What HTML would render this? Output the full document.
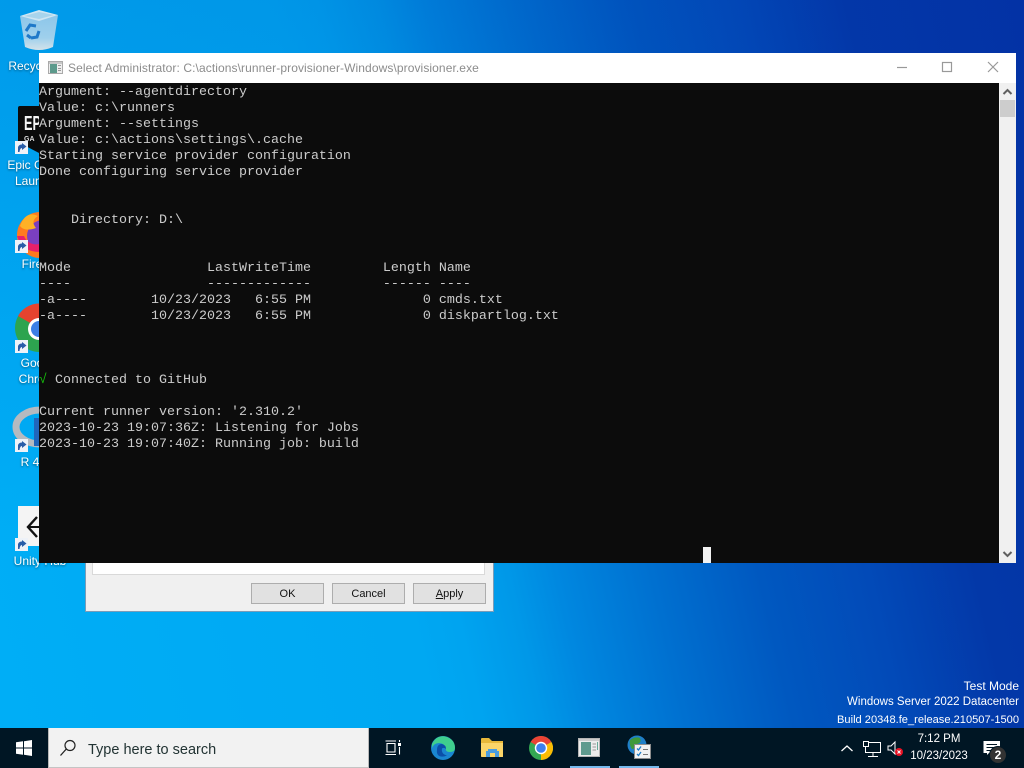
<!DOCTYPE html>
<html><head><meta charset="utf-8"><style>
html,body{margin:0;padding:0;width:1024px;height:768px;overflow:hidden}
body{position:relative;font-family:"Liberation Sans",sans-serif;background:linear-gradient(180deg,rgba(0,50,170,.14) 0,rgba(0,50,170,0) 70%),linear-gradient(77deg,#00aef6 0%,#00a8f2 37%,#00a4f0 41%,#0098e8 46%,#0088e0 50%,#0070d0 58%,#0058c0 67%,#024ab8 76%,#0338a8 85%,#0332a4 100%)}
.a{position:absolute}
.lbl{position:absolute;color:#fff;font-size:12px;line-height:16px;text-align:center;width:76px;text-shadow:0 1px 2px rgba(0,0,0,.5)}
.btn{position:absolute;top:583px;width:71px;height:19px;background:#e1e1e1;border:1px solid #adadad;font-size:11px;line-height:21px;text-align:center;color:#111}
pre{margin:0;position:absolute;left:39px;top:85px;font:13.333px/16px "Liberation Mono",monospace;color:#ccc}
.wm{position:absolute;right:5px;color:#fff;line-height:16px;white-space:nowrap}
</style></head><body>

<!-- desktop icons -->
<svg class="a" style="left:0;top:0" width="90" height="580" viewBox="0 0 90 580">
<defs><linearGradient id="bin" x1="0" y1="0" x2="0" y2="1"><stop offset="0" stop-color="#8cc6ea"/><stop offset=".65" stop-color="#9fd0ec"/><stop offset="1" stop-color="#d3e2ea"/></linearGradient></defs>
<path d="M20 16 L25 47 Q39 53 53 47 L58 15 L39 20 Z" fill="url(#bin)"/>
<path d="M20 16 L39 10 L58 15 L39 21 Z" fill="#cfe6f3"/><path d="M24 16 L39 12 L54 15 L39 19 Z" fill="#a8d4ec"/>
<path d="M26 31 L30 25 L36 26 M39 31 L37 37 L31 38 M27 35 L31 38" fill="none" stroke="#1f79c9" stroke-width="3"/>
<path d="M18 108 Q18 106 20 106 H42 V153 H39 L18 142 Z" fill="#0b0b0b"/>
<text x="24" y="130" font-size="20" font-weight="bold" font-family="Liberation Sans" fill="#f4f4f4" textLength="17" lengthAdjust="spacingAndGlyphs">EP</text>
<text x="24" y="141" font-size="7" font-weight="bold" font-family="Liberation Sans" fill="#ddd">GA</text>
<circle cx="40" cy="235" r="23" fill="#ff7a1f"/><circle cx="43" cy="236" r="16" fill="#7a3fc0"/><path d="M20 226 Q26 210 38 216 Q30 221 36 228 Q24 232 20 226Z" fill="#ffb126"/><path d="M17 236 Q22 252 40 252 L40 244 Q28 246 24 236Z" fill="#e8206a"/>
<circle cx="39" cy="328" r="24" fill="#2da44f"/><path d="M39 328 L18 316 A24 24 0 0 1 44 304 L50 310 Z" fill="#e5432f"/><circle cx="39" cy="329" r="11" fill="#fff"/><circle cx="39" cy="329" r="8" fill="#3d7fe6"/>
<ellipse cx="40" cy="427" rx="24" ry="17" fill="none" stroke="#b5bac0" stroke-width="7"/><rect x="34" y="418" width="8" height="28" fill="#2166bb"/>
<rect x="18" y="506" width="24" height="40" fill="#f4f4f4"/><path d="M37 517 L28 527 L37 537" fill="none" stroke="#111" stroke-width="2.400"/><path d="M28 527 H42" stroke="#111" stroke-width="2"/>
<g id="s"><rect x="15" y="141" width="13" height="13" fill="#eef2f8"/><path d="M18 152 L18 147 Q19 144.500 22 144.500 L22 143 L26.500 146.500 L22 150 L22 148 Q20 148 19.500 152Z" fill="#2a5da8"/></g>
<g transform="translate(0,99)"><rect x="15" y="141" width="13" height="13" fill="#eef2f8"/><path d="M18 152 L18 147 Q19 144.500 22 144.500 L22 143 L26.500 146.500 L22 150 L22 148 Q20 148 19.500 152Z" fill="#2a5da8"/></g>
<g transform="translate(0,199)"><rect x="15" y="141" width="13" height="13" fill="#eef2f8"/><path d="M18 152 L18 147 Q19 144.500 22 144.500 L22 143 L26.500 146.500 L22 150 L22 148 Q20 148 19.500 152Z" fill="#2a5da8"/></g>
<g transform="translate(0,298)"><rect x="15" y="141" width="13" height="13" fill="#eef2f8"/><path d="M18 152 L18 147 Q19 144.500 22 144.500 L22 143 L26.500 146.500 L22 150 L22 148 Q20 148 19.500 152Z" fill="#2a5da8"/></g>
<g transform="translate(0,397)"><rect x="15" y="141" width="13" height="13" fill="#eef2f8"/><path d="M18 152 L18 147 Q19 144.500 22 144.500 L22 143 L26.500 146.500 L22 150 L22 148 Q20 148 19.500 152Z" fill="#2a5da8"/></g>
</svg>
<div class="lbl" style="left:2px;top:58px">Recycle Bin</div>
<div class="lbl" style="left:2px;top:157px">Epic Games Launcher</div>
<div class="lbl" style="left:2px;top:256px">Firefox</div>
<div class="lbl" style="left:2px;top:355px">Google Chrome</div>
<div class="lbl" style="left:2px;top:454px">R 4.3.1</div>
<div class="lbl" style="left:2px;top:553px">Unity Hub</div>

<!-- dialog behind -->
<div class="a" style="left:85px;top:540px;width:407px;height:71px;background:#f0f0f0;border:1px solid #7a9cb8;border-top:0"></div>
<div class="a" style="left:92px;top:540px;width:391px;height:33px;background:#fff;border:1px solid #d9d9d9"></div>
<div class="btn" style="left:251px">OK</div>
<div class="btn" style="left:332px">Cancel</div>
<div class="btn" style="left:413px"><u>A</u>pply</div>

<!-- console -->
<div class="a" style="left:39px;top:53px;width:977px;height:510px;background:#fff"></div>
<div class="a" style="left:39px;top:83px;width:960px;height:480px;background:#0c0c0c"></div>
<div class="a" style="left:999px;top:83px;width:17px;height:480px;background:#f0f0f0"></div>
<div class="a" style="left:1000px;top:100px;width:15px;height:17px;background:#cdcdcd"></div>
<svg class="a" style="left:999px;top:83px" width="17" height="480"><path d="M4.500 11 L8.500 7 L12.500 11" fill="none" stroke="#606060" stroke-width="2"/><path d="M4.500 469 L8.500 473 L12.500 469" fill="none" stroke="#606060" stroke-width="2"/></svg>
<svg class="a" style="left:48px;top:60px" width="16" height="16"><rect x=".5" y="1.500" width="14" height="12" fill="#eee" stroke="#aaa"/><rect x="1" y="2" width="13" height="2" fill="#c8c8c8"/><rect x="2" y="4" width="7" height="9" fill="#5d9a8c"/><rect x="10" y="5" width="3" height="1" fill="#999"/><rect x="10" y="8" width="3" height="1" fill="#999"/><rect x="10" y="10" width="3" height="1" fill="#999"/></svg>
<div class="a" style="left:68px;top:60px;font-size:12px;line-height:16px;color:#8c8c8c;white-space:nowrap;letter-spacing:.09px">Select Administrator: C:\actions\runner-provisioner-Windows\provisioner.exe</div>
<svg class="a" style="left:890px;top:53px" width="126" height="30"><path d="M7 14.500 H17" stroke="#999" stroke-width="1.200"/><rect x="52.500" y="9.500" width="9" height="9" fill="none" stroke="#999" stroke-width="1.200"/><path d="M98 9 L108 19 M108 9 L98 19" stroke="#999" stroke-width="1.200"/></svg>
<pre>Argument: --agentdirectory
Value: c:\runners
Argument: --settings
Value: c:\actions\settings\.cache
Starting service provider configuration
Done configuring service provider


    Directory: D:\


Mode                 LastWriteTime         Length Name
----                 -------------         ------ ----
-a----        10/23/2023   6:55 PM              0 cmds.txt
-a----        10/23/2023   6:55 PM              0 diskpartlog.txt



<span style="color:#16c60c">√</span> Connected to GitHub

Current runner version: '2.310.2'
2023-10-23 19:07:36Z: Listening for Jobs
2023-10-23 19:07:40Z: Running job: build</pre>
<div class="a" style="left:703px;top:547px;width:8px;height:16px;background:#f2f2f2"></div>

<!-- watermark -->
<div class="wm" style="top:678px;font-size:12px">Test Mode</div>
<div class="wm" style="top:694px;font-size:11.500px">Windows Server 2022 Datacenter</div>
<div class="wm" style="top:712px;font-size:11.100px">Build 20348.fe_release.210507-1500</div>

<!-- taskbar -->
<div class="a" style="left:0;top:728px;width:1024px;height:40px;background:#001624"></div>
<svg class="a" style="left:16px;top:740px" width="17" height="16"><path d="M0 2.300 L7 1.300 V7.500 H0Z M8 1.200 L16 0 V7.500 H8Z M0 8.500 H7 V14.700 L0 13.700Z M8 8.500 H16 V16 L8 14.800Z" fill="#fff"/></svg>
<div class="a" style="left:48px;top:728px;width:319px;height:39px;background:#f2f2f2;border:1px solid #b8b8b8;border-top:0;border-bottom:1px solid #c4c4c4"></div>
<svg class="a" style="left:59px;top:739px" width="18" height="18"><circle cx="11" cy="6.500" r="5" fill="none" stroke="#222" stroke-width="1.200"/><path d="M7.300 10 L1.500 16.500" stroke="#222" stroke-width="1.300"/></svg>
<div class="a" style="left:88px;top:741px;font-size:14.500px;line-height:18px;color:#233;white-space:nowrap">Type here to search</div>

<svg class="a" style="left:384px;top:739px" width="18" height="18"><path d="M1.500 2 H12 M1.500 15.500 H12 M3 4.500 H11 V13 H3 Z" fill="none" stroke="#fff" stroke-width="1.100"/><rect x="14" y="4" width="3" height="3" fill="#fff"/><path d="M15.500 1 V3 M15.500 8 V15.500" stroke="#fff" stroke-width="1.100"/></svg>
<svg class="a" style="left:431px;top:736px" width="24" height="24"><circle cx="12" cy="12" r="12" fill="#1a86d0"/><path d="M1 8 Q6 -2 16 1 Q24 4 24 12 Q24 16 19 16 Q14 16 15 12 Q13 7 8 7 Q3 7 1 12Z" fill="#3fcf8e"/><path d="M6 14 Q6 8 11 8 Q15 9 15 13 Q13 11 11 12.500 Q10 18 16 19.500 Q10 22 7 19 Q5.500 17 6 14Z" fill="#0b4fa8"/></svg>
<svg class="a" style="left:481px;top:738px" width="23" height="20"><path d="M0 1 Q0 0 1 0 H8 L11 3 H22 V19 H1 Q0 19 0 18Z" fill="#e8b83a"/><path d="M0 5 H22 V18 Q22 19 21 19 H1 Q0 19 0 18Z" fill="#fbd569"/><path d="M5 19 V13 H7 V11 H16 V13 H18 V19 H14 V15 H9 V19Z" fill="#4a9de0"/></svg>
<svg class="a" style="left:529px;top:736px" width="24" height="24"><circle cx="12" cy="12" r="12" fill="#34a853"/><path d="M12 12 L1.600 6 A12 12 0 0 1 22.400 6 Z" fill="#ea4335"/><path d="M12 12 L22.400 6 A12 12 0 0 1 12 24 Z" fill="#fbbc05"/><circle cx="12" cy="12" r="6.200" fill="#fff"/><circle cx="12" cy="12" r="4.800" fill="#3f80ee"/></svg>
<svg class="a" style="left:578px;top:738px" width="23" height="20"><rect x=".5" y=".5" width="21" height="18" fill="#ececec" stroke="#b5b5b5"/><rect x="1" y="1" width="20" height="2" fill="#ccc"/><rect x="3" y="4" width="10" height="13" fill="#5f9a8e"/><path d="M14.500 6 H18 M14.500 9 H18 M14.500 12 H18" stroke="#999"/><rect x="19" y="4" width="1" height="8" fill="#6a9"/></svg>
<svg class="a" style="left:627px;top:735px" width="24" height="26"><circle cx="10" cy="10" r="9.500" fill="#1f7fc9"/><path d="M3 5 Q9 1 13 3 Q15 8 10 9 Q9 14 5 14 Q2 10 3 5Z" fill="#3f9a3a"/><rect x="7.500" y="9.500" width="16" height="14" fill="#f2f2f2" stroke="#8d8d8d"/><path d="M10 13.500 L11.500 15 L14 11.500 M10 19 L11.500 20.500 L14 17" fill="none" stroke="#1f7fc9" stroke-width="1.300"/><path d="M16 14.500 H21 M16 19.500 H21" stroke="#777"/></svg>
<div class="a" style="left:570px;top:766px;width:40px;height:2px;background:#76b9ed"></div>
<div class="a" style="left:619px;top:766px;width:40px;height:2px;background:#76b9ed"></div>

<svg class="a" style="left:840px;top:738px" width="70" height="20"><path d="M1.500 13 L7 8 L12.500 13" fill="none" stroke="#fff" stroke-width="1.300"/><rect x="25.500" y="4.500" width="15" height="10" fill="none" stroke="#fff"/><rect x="23.500" y="3.500" width="5" height="5" fill="#001624" stroke="#fff"/><path d="M33 15 V18 M28 18.500 H38" stroke="#fff"/><path d="M48 8 H51 L55 4 V16 L51 12 H48Z" fill="none" stroke="#fff"/><circle cx="59" cy="14" r="4" fill="#e81123"/><path d="M57.500 12.500 L60.500 15.500 M60.500 12.500 L57.500 15.500" stroke="#fff"/></svg>
<div class="a" style="left:900px;top:731px;width:78px;text-align:center;color:#fff;font-size:11.500px;line-height:17px">7:12 PM<br>10/23/2023</div>
<svg class="a" style="left:982px;top:738px" width="26" height="28"><path d="M1.500 3 H18 V15 H7 L5 17 V15 H1.500Z" fill="#fff"/><path d="M4.500 6.500 H15 M4.500 9.500 H15 M4.500 12.500 H12" stroke="#001624"/><circle cx="16" cy="17" r="8.500" fill="#333" stroke="#001624"/><text x="16" y="21" font-size="12" font-family="Liberation Sans" font-weight="bold" fill="#fff" text-anchor="middle">2</text></svg>
</body></html>
